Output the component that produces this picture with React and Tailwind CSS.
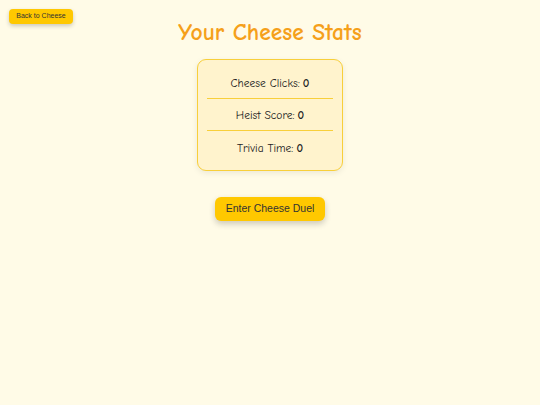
export default function App() {
  const stats = [
    ["Cheese Clicks", 0],
    ["Heist Score", 0],
    ["Trivia Time", 0],
  ];
  return (
    <div className="min-h-[405px] bg-[#fffbe7] relative" style={{ fontFamily: '"Comic Sans MS", "Comic Neue", cursive' }}>
      <button className="absolute left-[9px] top-[9px] h-[15px] w-[64px] rounded-[4px] bg-[#ffc800] text-[7px] text-[#333] shadow-[0_2px_4px_rgba(0,0,0,0.2)]" style={{ fontFamily: '"Liberation Sans", Arial, sans-serif' }}>
        Back to Cheese
      </button>
      <div className="flex flex-col items-center pt-[18px]">
        <h1 className="text-[23.5px] font-bold text-[#f5a01a] leading-[30px]">Your Cheese Stats</h1>
        <div className="mt-[11px] w-[146px] rounded-[9px] border border-[#f8cf3a] bg-[#fff3cd] px-[9px] py-[7px] shadow-[0_2px_6px_rgba(0,0,0,0.08)]">
          {stats.map(([label, value], i) => (
            <div key={label} className={"h-[32px] pt-[3px] flex items-center justify-center text-[11.5px] text-[#222] " + (i < 2 ? "border-b border-[#f8cf3a]" : "")}>
              {label}: <span className="font-bold ml-[3px]">{value}</span>
            </div>
          ))}
        </div>
        <button className="mt-[26px] h-[24px] w-[110px] rounded-[6px] bg-[#ffc800] text-[10.5px] text-[#333] shadow-[0_3px_6px_rgba(0,0,0,0.2)]" style={{ fontFamily: '"Liberation Sans", Arial, sans-serif' }}>
          Enter Cheese Duel
        </button>
      </div>
    </div>
  );
}
